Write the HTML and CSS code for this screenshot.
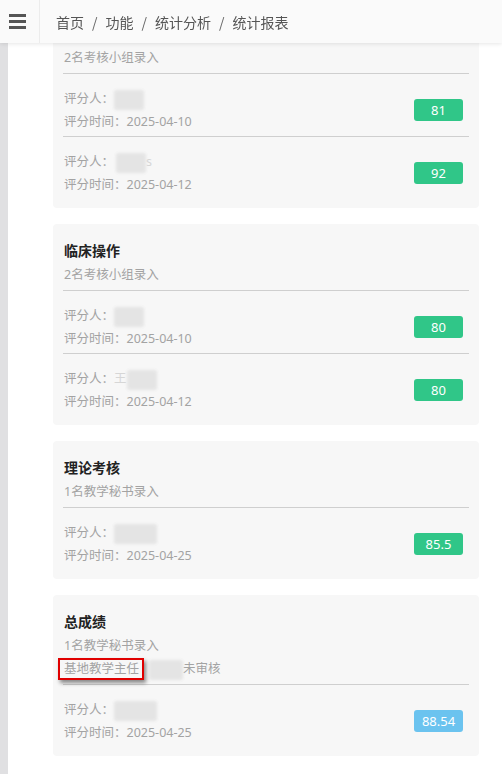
FILE: index.html
```html
<!DOCTYPE html>
<html lang="zh-CN">
<head>
  <meta charset="UTF-8" />
  <meta name="viewport" content="width=device-width, initial-scale=1.0"/>
  <title>统计报表</title>
  <link rel="stylesheet" href="styles.css">
</head>
<body>

  <!-- Top bar -->
  <header class="topbar">
    <div class="hamburger">
      <span></span><span></span><span></span>
    </div>
    <nav class="crumbs">
      <span>首页</span><i>/</i><span>功能</span><i>/</i><span>统计分析</span><i>/</i><span>统计报表</span>
    </nav>
  </header>

  <div class="layout">
    <aside class="side"></aside>

    <main class="main">

      <!-- Card 1 -->
      <section class="card">
        <div class="card-head">
          <h3>技能考核</h3>
          <p>2名考核小组录入</p>
        </div>
        <div class="row">
          <div class="info">
            <div>评分人：<span class="blur w30"></span></div>
            <div>评分时间：2025-04-10</div>
          </div>
          <span class="score">81</span>
        </div>
        <div class="row">
          <div class="info">
            <div>评分人：<span class="blur w30 ml2"></span><span class="faint">s</span></div>
            <div>评分时间：2025-04-12</div>
          </div>
          <span class="score">92</span>
        </div>
      </section>

      <!-- Card 2 -->
      <section class="card">
        <div class="card-head">
          <h3>临床操作</h3>
          <p>2名考核小组录入</p>
        </div>
        <div class="row">
          <div class="info">
            <div>评分人：<span class="blur w30"></span></div>
            <div>评分时间：2025-04-10</div>
          </div>
          <span class="score">80</span>
        </div>
        <div class="row">
          <div class="info">
            <div>评分人：<span class="faint">王</span><span class="blur w30"></span></div>
            <div>评分时间：2025-04-12</div>
          </div>
          <span class="score">80</span>
        </div>
      </section>

      <!-- Card 3 -->
      <section class="card">
        <div class="card-head">
          <h3>理论考核</h3>
          <p>1名教学秘书录入</p>
        </div>
        <div class="row">
          <div class="info">
            <div>评分人：<span class="blur w43"></span></div>
            <div>评分时间：2025-04-25</div>
          </div>
          <span class="score">85.5</span>
        </div>
      </section>

      <!-- Card 4 -->
      <section class="card">
        <div class="card-head">
          <h3>总成绩</h3>
          <p>1名教学秘书录入</p>
          <p><span class="mark">基地教学主任</span><span class="blur w34 ml5"></span>未审核</p>
        </div>
        <div class="row">
          <div class="info">
            <div>评分人：<span class="blur w43"></span></div>
            <div>评分时间：2025-04-25</div>
          </div>
          <span class="score total">88.54</span>
        </div>
      </section>

    </main>
  </div>

</body>
</html>
```

FILE: styles.css
```css
body {
  margin: 0;
  font-family: "Noto Sans", "Noto Sans CJK SC", sans-serif;
  background-color: #fff;
  color: #333;
}

.topbar {
  position: fixed;
  top: 0;
  left: 0;
  right: 0;
  height: 43px;
  display: flex;
  align-items: center;
  background-color: #fafafa;
  box-shadow: 0 1px 4px rgba(0, 0, 0, 0.1);
  z-index: 10;
}

.hamburger {
  width: 40px;
  height: 43px;
  border-right: 1px solid #ececec;
  display: flex;
  flex-direction: column;
  justify-content: center;
  gap: 3px;
  padding-left: 9px;
  box-sizing: border-box;
}

.hamburger span {
  display: block;
  width: 17px;
  height: 3px;
  background-color: #555;
}

.crumbs {
  margin-left: 16px;
  font-size: 14px;
  color: #555;
  font-family: "Noto Sans CJK SC", sans-serif;
}

.crumbs i {
  font-style: normal;
  margin: 0 8px;
  color: #666;
}

.layout {
  display: flex;
  min-height: 774px;
}

.side {
  width: 8px;
  background-color: #e0e0e2;
  flex-shrink: 0;
}

.main {
  padding: 7px 0 0 45px;
}

.card {
  width: 426px;
  box-sizing: border-box;
  background-color: #f7f7f7;
  border-radius: 4px;
  padding: 15px 10px 9px;
  margin-bottom: 16px;
}

.card-head {
  padding-bottom: 4px;
  border-bottom: 1px solid #cfcfcf;
}

.card-head h3 {
  margin: 0;
  font-size: 14px;
  line-height: 24px;
  font-weight: bold;
  color: #222;
  padding-left: 1px;
}

.card-head p {
  margin: 0;
  font-size: 12.5px;
  line-height: 23px;
  height: 23px;
  color: #a3a3a3;
  padding-left: 1px;
}

.row {
  display: flex;
  align-items: center;
  justify-content: space-between;
  padding: 13px 6px 3px 1px;
  border-bottom: 1px solid #cfcfcf;
}

.row:last-child {
  border-bottom: none;
}

.info {
  font-size: 12.5px;
  line-height: 23px;
  color: #a3a3a3;
}

.info div {
  height: 23px;
}

.blur {
  display: inline-block;
  height: 20px;
  vertical-align: middle;
  background-color: #e4e4e4;
  border-radius: 3px;
  filter: blur(1.5px);
}

.w30 { width: 30px; }
.w34 { width: 34px; }
.w43 { width: 43px; }
.ml2 { margin-left: 2px; }
.ml5 { margin-left: 5px; }

.faint {
  color: #d6d6d6;
}

.score {
  width: 49px;
  height: 22px;
  line-height: 22px;
  text-align: center;
  border-radius: 3px;
  background-color: #30c688;
  color: #fff;
  font-size: 13px;
}

.score.total {
  background-color: #6bc3ef;
}

.mark {
  display: inline-block;
  margin-left: -6px;
  padding: 0 3px 0 4px;
  line-height: 18px;
  border: 2px solid #e00000;
  box-shadow: 2px 3px 4px rgba(0, 0, 0, 0.45);
}
```
